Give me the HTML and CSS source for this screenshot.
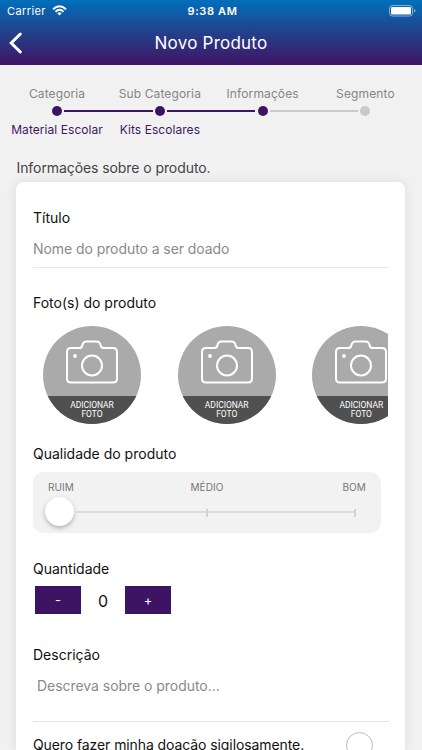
FILE: index.html
```html
<!DOCTYPE html>
<html lang="pt-BR">
<head>
<meta charset="utf-8">
<title>Novo Produto</title>
<link rel="stylesheet" href="styles.css">
</head>
<body>
<svg class="defs" width="0" height="0" aria-hidden="true">
  <symbol id="camera" viewBox="0 0 54 44">
    <g fill="none" stroke="#fff" stroke-width="2" stroke-linejoin="round">
      <path d="M5 8H14C16 8 17 7.500 17.300 5.500C17.800 3 19 1.500 21.500 1.500H31.500C34 1.500 35.200 3 35.700 5.500C36 7.500 37 8 39 8H48Q52 8 52 12V38.500Q52 42.500 48 42.500H6Q2 42.500 2 38.500V12Q2 8 6 8"/>
      <circle cx="27" cy="25.500" r="10"/>
    </g>
    <circle cx="10" cy="16" r="1.900" fill="#fff"/>
  </symbol>
</svg>
<header class="header">
  <div class="status">
    <div class="carrier"><span class="carrier-name">Carrier</span>
      <svg class="wifi" width="15" height="11" viewBox="0 0 15 11"><g fill="none" stroke="#fff" stroke-width="1.900"><path d="M1 4.200Q7.500 -1.900 14 4.200"/><path d="M3.500 6.700Q7.500 3 11.500 6.700"/></g><path d="M5.300 8.300Q7.500 6.400 9.700 8.300L7.500 10.600Z" fill="#fff"/></svg>
    </div>
    <span class="clock">9:38 AM</span>
    <svg class="battery" width="27" height="12" viewBox="0 0 27 12"><rect x=".5" y=".5" width="23" height="10.500" rx="2.800" fill="none" stroke="#fff" stroke-opacity=".5"/><rect x="2" y="2" width="20" height="7.500" rx="1.300" fill="#fff"/><path d="M25 4Q26.500 4.600 26.500 5.750T25 7.500Z" fill="#fff" fill-opacity=".5"/></svg>
  </div>
  <div class="nav">
    <svg class="back" width="14" height="22" viewBox="0 0 14 22"><path d="M11.300 2L2.200 11L11.300 20" fill="none" stroke="#fff" stroke-width="3" stroke-linecap="round"/></svg>
    <h1 class="title">Novo Produto</h1>
  </div>
</header>

<ol class="steps">
  <li class="step done"><span class="step-name">Categoria</span><i class="dot"></i><span class="step-value">Material Escolar</span></li>
  <li class="step done"><span class="step-name">Sub Categoria</span><i class="dot"></i><span class="step-value">Kits Escolares</span></li>
  <li class="step current"><span class="step-name">Informações</span><i class="dot"></i></li>
  <li class="step"><span class="step-name">Segmento</span><i class="dot"></i></li>
</ol>

<p class="intro">Informações sobre o produto.</p>

<main class="card">
  <section class="field">
    <h2 class="label">Título</h2>
    <p class="placeholder name-hint">Nome do produto a ser doado</p>
  </section>

  <h2 class="label t-fotos">Foto(s) do produto</h2>
  <div class="photos">
    <div class="photo"><svg class="camera"><use href="#camera"/></svg><span class="add"><span>ADICIONAR</span><span>FOTO</span></span></div>
    <div class="photo"><svg class="camera"><use href="#camera"/></svg><span class="add"><span>ADICIONAR</span><span>FOTO</span></span></div>
    <div class="photo"><svg class="camera"><use href="#camera"/></svg><span class="add"><span>ADICIONAR</span><span>FOTO</span></span></div>
  </div>

  <h2 class="label t-qualidade">Qualidade do produto</h2>
  <div class="quality">
    <div class="scale"><span>RUIM</span><span class="mid">MÉDIO</span><span class="end">BOM</span></div>
    <div class="slider"><i class="knob"></i><i class="track"></i><i class="tick"></i><i class="track second"></i><i class="tick"></i></div>
  </div>

  <h2 class="label t-quantidade">Quantidade</h2>
  <div class="stepper"><span class="btn">-</span><span class="count">0</span><span class="btn">+</span></div>

  <h2 class="label t-descricao">Descrição</h2>
  <p class="placeholder desc-hint">Descreva sobre o produto...</p>

  <div class="secret"><span class="label t-secret">Quero fazer minha doação sigilosamente.</span><i class="radio"></i></div>
</main>
</body>
</html>
```
FILE: styles.css
```css
* { box-sizing: border-box; }
html, body { height: 750px; overflow: hidden; }
body { margin: 0; background: #f1f1f1; font-family: Inter, "Liberation Sans", sans-serif; color: #111; }
h1, h2, p, ol { margin: 0; padding: 0; font-weight: 400; }
i { display: block; flex: none; }
.defs { display: block; height: 0; }

.header { height: 65px; background: linear-gradient(#016fbb, #20458f 45%, #3d1767 97%); color: #fff; }
.status { display: grid; grid-template-columns: 1fr auto 1fr; align-items: center; height: 21px; padding: 0 6px 0 9px; font-size: 11px; }
.carrier { display: flex; align-items: center; gap: 6px; margin-left: -2px; }
.carrier-name { letter-spacing: .4px; }
.wifi { display: block; }
.clock { font-weight: 600; letter-spacing: .65px; }
.battery { justify-self: end; }
.nav { display: grid; grid-template-columns: 40px 1fr 40px; align-items: center; height: 44px; }
.back { margin-left: 9px; }
.title { text-align: center; font-size: 17px; letter-spacing: .23px; }

.steps { display: flex; height: 86px; padding: 18px 5.200px 0 5.700px; list-style: none; }
.step { flex: 1; display: flex; flex-direction: column; align-items: center; }
.step-name, .step-value { line-height: 20px; font-size: 12px; white-space: nowrap; }
.step-name { height: 20px; line-height: 22px; color: #858585; letter-spacing: .12px; }
.step-value { color: #3d1767; letter-spacing: .06px; }
.dot { width: 10px; height: 10px; margin: 3px 0 4px; border-radius: 50%; background: #c9c9c9; }
.step.done .dot, .step.current .dot { padding-top: 4px; background: #3d1463; }
.step.done .dot::after, .step.current .dot::after { content: ""; display: block; width: 88.500px; height: 2px; margin-left: 12px; background: #cacaca; }
.step.done .dot::after { background: #3d1463; }

.intro { height: 31px; padding-left: 16.500px; line-height: 34px; font-size: 14px; letter-spacing: -.08px; color: #444; }

.card { width: 389px; height: 568.500px; margin: -.500px 0 0 16.400px; padding: 26px 16px 0 16.600px; border-radius: 8px 8px 0 0; background: #fff; box-shadow: 0 0 12px rgba(0, 0, 0, .09); overflow: hidden; }
.label { line-height: 20px; font-size: 14px; white-space: nowrap; }
.placeholder { line-height: 20px; font-size: 14px; color: #8a8a8a; letter-spacing: -.07px; }
.name-hint { width: 356px; height: 40.500px; padding-top: 11px; border-bottom: 1px solid #e9e9e9; }
.field { height: 85.500px; }
.t-fotos { margin-bottom: 12.500px; }

.photos { display: flex; gap: 36.700px; height: 98px; padding-left: 10px; width: 355px; overflow: hidden; }
.photo { flex: none; display: flex; flex-direction: column; align-items: center; width: 98px; height: 98px; border-radius: 50%; overflow: hidden; background: #aaa; }
.camera { flex: none; width: 54px; height: 44px; margin-top: 14px; }
.add { display: flex; flex-direction: column; align-items: center; width: 98px; height: 28px; margin-top: 12.500px; padding-top: 5px; background: #505050; color: #fff; font: 8.500px/9px Roboto, sans-serif; letter-spacing: -.05px; }

.t-qualidade { margin-top: 20px; }
.quality { width: 348px; height: 61px; margin-top: 8px; padding-top: 7px; border-radius: 10px; background: #f2f2f2; }
.scale { display: grid; grid-template-columns: 1fr auto 1fr; padding: 0 15px; line-height: 16px; font-size: 10px; color: #777; letter-spacing: .1px; }
.end { text-align: right; }
.slider { display: flex; align-items: center; height: 34px; padding-left: 12px; }
.knob { width: 29px; height: 29px; border-radius: 50%; background: #fff; box-shadow: 0 2px 4px rgba(0, 0, 0, .28); }
.track { width: 132px; height: 2px; background: #dcdcdc; }
.track.second { width: 146px; }
.tick { width: 2px; height: 8px; margin-top: 2px; background: #d2d2d2; }

.t-quantidade { margin-top: 26px; }
.stepper { display: flex; height: 28px; margin: 7px 0 0 2px; line-height: 28px; text-align: center; }
.btn { width: 46px; background: #3d1463; color: #fff; font-size: 13px; }
.count { width: 44px; font-size: 16px; line-height: 30px; }

.t-descricao { margin-top: 31px; }
.desc-hint { height: 56px; padding: 11px 0 0 4px; letter-spacing: -.04px; }
.secret { display: flex; justify-content: space-between; width: 356px; padding: 10px 15.500px 0 0; border-top: 1px solid #e4e4e4; }
.t-secret { padding-top: 3px; letter-spacing: -.09px; }
.radio { width: 27px; height: 27px; border: 1px solid #bbb; border-radius: 50%; }
```
